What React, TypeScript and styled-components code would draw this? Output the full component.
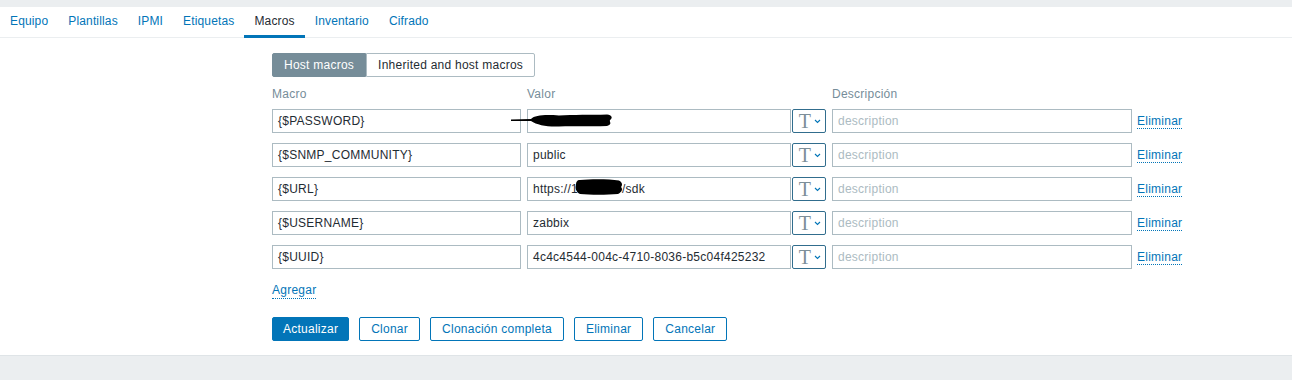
import React from 'react';
import styled, {createGlobalStyle} from "styled-components";

const GlobalStyle = createGlobalStyle`
  html, body {
    margin: 0;
    padding: 0;
    background: #ebeef0;
    font-family: "Liberation Sans", Arial, sans-serif;
    font-size: 12px;
    letter-spacing: 0.25px;
    color: #1f2c33;
  }
`

interface TabProps {
	$active?: boolean;
}

interface RedactProps {
	$left: number;
	$top: number;
}

const Page = styled.div`
  padding-top: 7px;
  height: 380px;
  box-sizing: border-box;
`

const Panel = styled.div`
  background: #ffffff;
  border-bottom: 1px solid #dfe4e7;
  padding-bottom: 14px;
`

const TabBar = styled.ul`
  display: flex;
  margin: 0;
  padding: 0;
  list-style: none;
  height: 30px;
  border-bottom: 1px solid #ebeef0;
  letter-spacing: 0.15px;
`

const Tab = styled.li<TabProps>`
  padding: 0 10px;
  line-height: 28px;
  color: ${props => props.$active ? '#1f2c33' : '#0275b8'};
  border-bottom: 3px solid ${props => props.$active ? '#0275b8' : 'transparent'};
  margin-bottom: -1px;
`

const Content = styled.div`
  padding: 15px 0 0 272px;
`

const Segmented = styled.div`
  display: flex;
  margin-bottom: 10px;
`

const Segment = styled.div<TabProps>`
  height: 24px;
  box-sizing: border-box;
  line-height: 22px;
  padding: 0 11px;
  border: 1px solid ${props => props.$active ? '#768d99' : '#acbbc2'};
  background: ${props => props.$active ? '#768d99' : '#ffffff'};
  color: ${props => props.$active ? '#ffffff' : '#1f2c33'};
  border-radius: ${props => props.$active ? '2px 0 0 2px' : '0 2px 2px 0'};
`

const Grid = styled.div`
  display: grid;
  grid-template-columns: 255px 265px 34px 311px auto;
  row-gap: 10px;
  align-items: center;
  width: 960px;
`

const HeadLabel = styled.div<{ $indent?: boolean }>`
  color: #768d99;
  height: 12px;
  line-height: 14px;
  margin-left: ${props => props.$indent ? '6px' : '0'};
`

const Cell = styled.div`
  position: relative;
  display: flex;
`

const Input = styled.div<{ $placeholder?: boolean }>`
  height: 24px;
  box-sizing: border-box;
  flex: 1;
  display: flex;
  align-items: center;
  border: 1px solid #acbbc2;
  padding: 0 5px;
  white-space: pre;
  overflow: hidden;
  color: ${props => props.$placeholder ? '#acbbc2' : '#1f2c33'};
`

const MacroCell = styled(Cell)`
  margin-right: 6px;
`

const ValueCell = styled(Cell)`
  margin-right: 1px;
`

const DescCell = styled(Cell)`
  margin-left: 6px;
  margin-right: 5px;
`

const TypeButton = styled.div`
  height: 24px;
  box-sizing: border-box;
  width: 34px;
  border: 1px solid #316d8d;
  border-radius: 2px;
  display: flex;
  align-items: center;
  justify-content: center;
  gap: 3px;
  padding-left: 2px;
`

const TypeGlyph = styled.span`
  font-family: "Liberation Serif", "Times New Roman", serif;
  font-size: 20px;
  line-height: 20px;
  color: #7d8f99;
`

const Link = styled.span`
  color: #0275b8;
  border-bottom: 1px dotted #0275b8;
  line-height: 14px;
  justify-self: start;
`

const AddRow = styled.div`
  margin-top: 14px;
  height: 16px;
  display: flex;
`

const Actions = styled.div`
  display: flex;
  gap: 10px;
  margin-top: 18px;
`

const Button = styled.div<{ $primary?: boolean }>`
  height: 24px;
  box-sizing: border-box;
  border: 1px solid #0275b8;
  border-radius: 2px;
  padding: 0 ${props => props.$primary ? '10px' : '11px'};
  line-height: 22px;
  background: ${props => props.$primary ? '#0275b8' : '#ffffff'};
  color: ${props => props.$primary ? '#ffffff' : '#0275b8'};
`

const Redaction = styled.svg<RedactProps>`
  position: absolute;
  left: ${props => props.$left}px;
  top: ${props => props.$top}px;
  overflow: visible;
`

const InlineRedaction = styled.svg`
  margin: -4px -1px 0 -3px;
  flex-shrink: 0;
`

const Chevron = () => (
	<svg width="7" height="5" viewBox="0 0 7 5">
		<path d="M1 1 L3.5 3.5 L6 1" fill="none" stroke="#0275b8" strokeWidth="1.1"/>
	</svg>
);

const tabs = ['Equipo', 'Plantillas', 'IPMI', 'Etiquetas', 'Macros', 'Inventario', 'Cifrado'];

interface MacroRow {
	macro: string;
	value: React.ReactNode;
	redactPassword?: boolean;
}

const rows: MacroRow[] = [
	{macro: '{$PASSWORD}', value: '', redactPassword: true},
	{macro: '{$SNMP_COMMUNITY}', value: 'public'},
	{
		macro: '{$URL}',
		value: (
			<>
				https://1
				<InlineRedaction width="48" height="16" viewBox="0 0 48 16">
					<path d="M5 1 C16 0 34 0 44 1.5 C47 3 48 6 46 8 C48 10 47 13 43 15 C32 16 15 16 5 15 C1 13 0 9 1 6 C1 3 2 1 5 1 Z" fill="#000"/>
				</InlineRedaction>
				/sdk
			</>
		),
	},
	{macro: '{$USERNAME}', value: 'zabbix'},
	{macro: '{$UUID}', value: '4c4c4544-004c-4710-8036-b5c04f425232'},
];

export default function App() {
	return (
		<Page>
			<GlobalStyle/>
			<Panel>
				<TabBar>
					{tabs.map(t => <Tab key={t} $active={t === 'Macros'}>{t}</Tab>)}
				</TabBar>
				<Content>
					<Segmented>
						<Segment $active>Host macros</Segment>
						<Segment>Inherited and host macros</Segment>
					</Segmented>
					<Grid>
						<HeadLabel>Macro</HeadLabel>
						<HeadLabel>Valor</HeadLabel>
						<div/>
						<HeadLabel $indent>Descripción</HeadLabel>
						<div/>
						{rows.map(r => (
							<React.Fragment key={r.macro}>
								<MacroCell>
									<Input>{r.macro}</Input>
								</MacroCell>
								<ValueCell>
									<Input>{r.value}</Input>
									{r.redactPassword && (
										<Redaction $left={-16} $top={4} width="104" height="16">
											<path d="M0 6.5 L20 6 C24 2 34 1.5 48 2.5 C62 1.5 80 2 96 1.5 C101 2 102 5 99 7 C98 9 102 11 96 13 C80 14 62 12.5 48 13.5 C36 14 26 12 20 8 L0 8 Z" fill="#000"/>
										</Redaction>
									)}
								</ValueCell>
								<TypeButton>
									<TypeGlyph>T</TypeGlyph>
									<Chevron/>
								</TypeButton>
								<DescCell>
									<Input $placeholder>description</Input>
								</DescCell>
								<Link>Eliminar</Link>
							</React.Fragment>
						))}
					</Grid>
					<AddRow>
						<Link>Agregar</Link>
					</AddRow>
					<Actions>
						<Button $primary>Actualizar</Button>
						<Button>Clonar</Button>
						<Button>Clonación completa</Button>
						<Button>Eliminar</Button>
						<Button>Cancelar</Button>
					</Actions>
				</Content>
			</Panel>
		</Page>
	);
}
